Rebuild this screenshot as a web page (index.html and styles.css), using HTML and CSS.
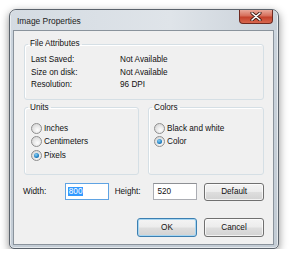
FILE: index.html
```html
<!DOCTYPE html>
<html lang="en">
<head>
  <meta charset="UTF-8" />
  <title>Image Properties</title>
  <link rel="stylesheet" href="styles.css">
</head>
<body>
  <div class="window">
    <div class="titlebar">
      <span class="title">Image Properties</span>
      <div class="close">
        <svg width="12" height="9" viewBox="0 0 12 9">
          <path d="M2 1 L10 8 M10 1 L2 8" stroke="#3a1a14" stroke-width="3.2" stroke-linecap="round"/>
          <path d="M2 1 L10 8 M10 1 L2 8" stroke="#fff" stroke-width="1.6" stroke-linecap="round"/>
        </svg>
      </div>
    </div>

    <div class="client">
      <fieldset class="group attrs">
        <legend>File Attributes</legend>
        <div class="attr-row"><span class="attr-name">Last Saved:</span><span>Not Available</span></div>
        <div class="attr-row"><span class="attr-name">Size on disk:</span><span>Not Available</span></div>
        <div class="attr-row"><span class="attr-name">Resolution:</span><span>96 DPI</span></div>
      </fieldset>

      <div class="pair">
        <fieldset class="group units">
          <legend>Units</legend>
          <label class="radio"><span class="dot"></span>Inches</label>
          <label class="radio"><span class="dot"></span>Centimeters</label>
          <label class="radio"><span class="dot on"></span>Pixels</label>
        </fieldset>
        <fieldset class="group colors">
          <legend>Colors</legend>
          <label class="radio"><span class="dot"></span>Black and white</label>
          <label class="radio"><span class="dot on"></span>Color</label>
        </fieldset>
      </div>

      <div class="size-row">
        <span class="lbl-w">Width:</span>
        <div class="field focus"><span class="sel">800</span></div>
        <span class="lbl-h">Height:</span>
        <div class="field">520</div>
        <div class="btn">Default</div>
      </div>

      <div class="actions">
        <div class="btn default">OK</div>
        <div class="btn">Cancel</div>
      </div>
    </div>
  </div>
</body>
</html>
```

FILE: styles.css
```css
body {
  margin: 0;
  background: #fff;
  font-family: "Liberation Sans", Arial, sans-serif;
  font-size: 8.2px;
  color: #111;
}
.window {
  box-sizing: border-box;
  width: 270px;
  height: 240px;
  margin: 9px 0 0 9px;
  border: 1px solid #5b636c;
  border-radius: 7px 7px 5px 5px;
  background: linear-gradient(180deg, #d6dde5 0%, #cad3dc 12%, #c3ccd5 100%);
  box-shadow: 0 3px 9px rgba(0,0,0,0.45), inset 0 0 0 1px rgba(255,255,255,0.55);
  padding: 0 4px 3px 3px;
}
.titlebar {
  height: 20px;
  display: flex;
  align-items: center;
  justify-content: space-between;
  background: linear-gradient(90deg, #d4dbe2 0%, #dfe4e9 60%, #c9d1d9 100%);
  margin: 0 -3px 0 -2px;
  padding: 0 0 0 6px;
  border-radius: 6px 6px 0 0;
}
.title {
  font-size: 8.4px;
  color: #1c1c1c;
  margin-top: 1px;
}
.close {
  align-self: flex-start;
  width: 32px;
  height: 13px;
  margin-right: 4px;
  border: 1px solid #6e2a20;
  border-top: none;
  border-radius: 0 0 4px 4px;
  background: linear-gradient(180deg, #e9a99b 0%, #d66e5a 45%, #c4422c 55%, #d8674e 100%);
  display: flex;
  align-items: center;
  justify-content: center;
}
.client {
  box-sizing: border-box;
  height: 215px;
  background: #f0f0f0;
  border: 1px solid #8a939c;
  padding: 8px 9px 0 10px;
}
.group {
  margin: 0;
  border: 1px solid #d5dfe5;
  border-radius: 3px;
  box-shadow: inset 1px 1px 0 #fff;
}
.group legend {
  padding: 0 2px;
  margin-left: -3px;
  line-height: 10px;
}
.attrs {
  padding: 5px 6px 7px 6px;
}
.attr-row {
  display: flex;
  line-height: 12.5px;
}
.attr-name {
  width: 89px;
}
.pair {
  display: flex;
  gap: 9px;
  margin-top: 3px;
}
.units {
  width: 115px;
  box-sizing: border-box;
  height: 72px;
  padding: 9px 6px 0 6px;
}
.colors {
  flex: 1;
  box-sizing: border-box;
  height: 72px;
  padding: 9px 5px 0 5px;
}
.colors legend {
  margin-left: -2px;
}
.radio {
  display: flex;
  align-items: center;
  height: 13.5px;
}
.dot {
  box-sizing: border-box;
  width: 11px;
  height: 11px;
  border-radius: 50%;
  border: 1px solid #8f8f8f;
  background: radial-gradient(circle at 60% 65%, #fdfdfd 0%, #e3e3e3 55%, #cfcfcf 100%);
  margin-right: 2px;
  position: relative;
}
.dot.on::after {
  content: "";
  position: absolute;
  left: 2px;
  top: 2px;
  width: 5px;
  height: 5px;
  border-radius: 50%;
  background: radial-gradient(circle at 40% 35%, #8ad0f5 0%, #1f7fc2 60%, #0d4f86 100%);
}
.size-row {
  display: flex;
  align-items: center;
  margin: 8px 0 0 -1px;
  height: 18px;
}
.lbl-w {
  width: 42px;
}
.lbl-h {
  width: 39px;
  margin-left: 6px;
}
.field {
  box-sizing: border-box;
  width: 44px;
  height: 17px;
  background: #fff;
  border: 1px solid #abadb3;
  border-top-color: #8e9094;
  padding: 0 0 0 3px;
  line-height: 15px;
  align-self: flex-start;
}
.field.focus {
  border-color: #5fa3e3;
}
.sel {
  background: #3399ff;
  color: #fff;
  padding: 0 1px;
  margin-left: -1px;
}
.btn {
  box-sizing: border-box;
  width: 60px;
  height: 18px;
  border: 1px solid #707070;
  border-radius: 3px;
  background: linear-gradient(180deg, #f4f4f4 0%, #ececec 48%, #dedede 52%, #d2d2d2 100%);
  box-shadow: inset 0 0 0 1px rgba(255,255,255,0.7);
  display: flex;
  align-items: center;
  justify-content: center;
  margin-left: 7px;
}
.actions {
  display: flex;
  justify-content: flex-end;
  margin-top: 17px;
}
.actions .btn {
  height: 19px;
}
.btn.default {
  border-color: #3c7fb1;
  box-shadow: inset 0 0 0 1px #a6d6f2;
}
```
